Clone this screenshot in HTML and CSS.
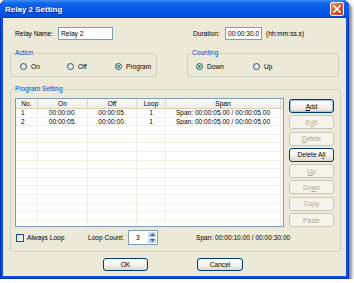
FILE: index.html
```html
<!DOCTYPE html>
<html lang="en">
<head>
  <meta charset="UTF-8">
  <title>Relay 2 Setting</title>
  <link rel="stylesheet" href="styles.css">
</head>
<body>

  <div class="window">
    <div class="titlebar">
      <span class="title">Relay 2 Setting</span>
      <span class="close">
        <svg width="8" height="8" viewBox="0 0 8 8">
          <path d="M1 1 L7 7 M7 1 L1 7" stroke="#fff" stroke-width="1.6" stroke-linecap="square"/>
        </svg>
      </span>
    </div>

    <div class="client">
      <div class="top-row">
        <div class="name-field">
          <span class="label">Relay Name:</span>
          <span class="textbox name-box">Relay 2</span>
        </div>
        <div class="duration-field">
          <span class="label">Duration:</span>
          <span class="textbox duration-box">00:00:30.0</span>
          <span class="hint">(hh:mm:ss.s)</span>
        </div>
      </div>

      <div class="group-row">
        <fieldset class="group action-group">
          <legend>Action</legend>
          <div class="radio-row action-row">
            <label class="radio w-on"><span class="circle"></span>On</label>
            <label class="radio w-off"><span class="circle"></span>Off</label>
            <label class="radio checked"><span class="circle"></span>Program</label>
          </div>
        </fieldset>
        <fieldset class="group counting-group">
          <legend>Counting</legend>
          <div class="radio-row counting-row">
            <label class="radio w-down checked"><span class="circle"></span>Down</label>
            <label class="radio"><span class="circle"></span>Up</label>
          </div>
        </fieldset>
      </div>

      <fieldset class="group program-group">
        <legend>Program Setting</legend>
        <div class="program-inner">
          <div class="program-body">
            <div class="listview">
              <div class="list-header">
                <div class="cell col-no">No.</div>
                <div class="cell col-on">On</div>
                <div class="cell col-off">Off</div>
                <div class="cell col-loop">Loop</div>
                <div class="cell col-span">Span</div>
              </div>
              <div class="list-body" id="listBody"></div>
            </div>

            <div class="button-column">
              <div class="btn default"><span><u>A</u>dd</span></div>
              <div class="btn disabled"><span>E<u>d</u>it</span></div>
              <div class="btn disabled"><span><u>D</u>elete</span></div>
              <div class="btn"><span>Delete A<u>l</u>l</span></div>
              <div class="btn disabled"><span><u>U</u>p</span></div>
              <div class="btn disabled"><span>Do<u>w</u>n</span></div>
              <div class="btn disabled"><span>Copy</span></div>
              <div class="btn disabled"><span>Paste</span></div>
            </div>
          </div>

          <div class="loop-row">
            <label class="check-item"><span class="checkbox"></span>Always Loop</label>
            <span class="count-label">Loop Count:</span>
            <div class="spin">
              <span class="spin-value">3</span>
              <span class="spin-buttons">
                <span class="spin-btn">
                  <svg width="5" height="3" viewBox="0 0 5 3"><path d="M0 3 L2.5 0 L5 3 Z" fill="#4D6185"/></svg>
                </span>
                <span class="spin-btn">
                  <svg width="5" height="3" viewBox="0 0 5 3"><path d="M0 0 L2.5 3 L5 0 Z" fill="#4D6185"/></svg>
                </span>
              </span>
            </div>
            <span class="total-span">Span: 00:00:10.00 / 00:00:30.00</span>
          </div>
        </div>
      </fieldset>

      <div class="dialog-buttons">
        <div class="btn ok-btn">OK</div>
        <div class="btn cancel-btn">Cancel</div>
      </div>
    </div>
  </div>

  <script>
    const rows = [
      { no: "1", on: "00:00:00.", off: "00:00:05.", loop: "1", span: "Span: 00:00:05.00 / 00:00:05.00" },
      { no: "2", on: "00:00:05.", off: "00:00:00.", loop: "1", span: "Span: 00:00:05.00 / 00:00:05.00" }
    ];
    const body = document.getElementById("listBody");

    for (let i = 0; i < 14; i++) {
      const r = rows[i] || { no: "", on: "", off: "", loop: "", span: "" };
      const row = document.createElement("div");
      row.className = "list-row";
      [["col-no", r.no], ["col-on", r.on], ["col-off", r.off], ["col-loop", r.loop], ["col-span", r.span]]
        .forEach(([cls, text]) => {
          const cell = document.createElement("div");
          cell.className = `cell ${cls}`;
          cell.textContent = text;
          row.appendChild(cell);
        });
      body.appendChild(row);
    }
  </script>

</body>
</html>
```

FILE: styles.css
```css
* {
  margin: 0;
  padding: 0;
  box-sizing: border-box;
}

body {
  background-color: #fff;
  font-family: "Liberation Sans", Arial, sans-serif;
  font-size: 6.6px;
  color: #000;
}

.window {
  width: 349px;
  height: 279px;
  display: flex;
  flex-direction: column;
  padding: 0 3px 3px;
  background-color: #0b4fe0;
  border-radius: 6px 6px 0 0;
  box-shadow: 3px 3px 3px rgba(0, 0, 0, 0.45), inset 0 0 0 1px #0730b8;
}

.titlebar {
  height: 18px;
  margin: 0 -3px;
  padding: 0 5px 0 5px;
  display: flex;
  align-items: center;
  justify-content: space-between;
  border-radius: 6px 6px 0 0;
  background: linear-gradient(#3d8ef5 0%, #1466ec 18%, #0658e8 45%, #0453e2 80%, #0346cf 100%);
}

.title {
  color: #fff;
  font-weight: bold;
  font-size: 8px;
  text-shadow: 1px 1px 0 #0a2e9c;
}

.close {
  width: 14px;
  height: 14px;
  border: 1px solid #fff;
  border-radius: 2px;
  background: linear-gradient(135deg, #f09a78 0%, #e0592e 45%, #c53a12 100%);
  display: flex;
  align-items: center;
  justify-content: center;
}

.client {
  flex: 1;
  background-color: #ece9d8;
  padding: 0 7px;
}

/* top fields */

.top-row {
  display: flex;
  align-items: center;
  height: 13px;
  margin-top: 9px;
  padding-left: 5px;
}

.name-field {
  width: 178px;
  display: flex;
  align-items: center;
}

.name-field .label {
  width: 43px;
}

.duration-field {
  display: flex;
  align-items: center;
}

.duration-field .label {
  width: 32px;
}

.textbox {
  height: 13px;
  border: 1px solid #7f9db9;
  background-color: #fff;
  padding-left: 2px;
  line-height: 11px;
}

.name-box {
  width: 55px;
}

.duration-box {
  width: 37px;
}

.hint {
  margin-left: 4px;
}

/* group boxes */

.group {
  border: 1px solid #d0d0bf;
  border-radius: 3px;
}

.group legend {
  color: #0046d5;
  line-height: 8px;
  padding: 0 1px;
  margin-left: 3px;
}

.group-row {
  display: flex;
  gap: 30px;
  margin-top: 9px;
}

.action-group {
  width: 148px;
}

.counting-group {
  width: 153px;
}

.radio-row {
  display: flex;
  padding: 5px 0 5px 9px;
}

.counting-row {
  padding-left: 8px;
}

.radio {
  display: flex;
  align-items: center;
  height: 9px;
}

.radio .circle {
  width: 7px;
  height: 7px;
  margin-right: 4px;
  border: 1px solid #1c5180;
  border-radius: 50%;
  background: linear-gradient(135deg, #dcdad0, #fff);
  display: flex;
  align-items: center;
  justify-content: center;
}

.radio.checked .circle::after {
  content: "";
  width: 3px;
  height: 3px;
  border-radius: 50%;
  background-color: #21a121;
}

.w-on { width: 47px; }
.w-off { width: 48px; }
.w-down { width: 57px; }

/* program setting */

.program-group {
  margin-top: 8px;
}

.program-inner {
  padding: 5px 6px 6px 4px;
}

.program-body {
  display: flex;
  gap: 5px;
}

.listview {
  width: 269px;
  height: 129px;
  border: 1px solid #7f9db9;
  background-color: #fff;
  overflow: hidden;
}

.list-header {
  display: flex;
  height: 10px;
  background: linear-gradient(#fbfaf6, #efede4);
  border-bottom: 1px solid #d6d2c2;
}

.list-header .cell {
  text-align: center;
  line-height: 9px;
  border-right: 1px solid #dcd8c8;
}

.list-row {
  display: flex;
  height: 8.6px;
  border-bottom: 1px solid #f1efe4;
}

.list-row .cell {
  text-align: center;
  line-height: 7.6px;
  border-right: 1px solid #f1efe4;
  white-space: nowrap;
  overflow: hidden;
}

.list-row .col-no {
  text-align: left;
  padding-left: 5px;
}

.col-no { width: 22px; }
.col-on { width: 50px; }
.col-off { width: 49px; }
.col-loop { width: 29px; }
.col-span { width: 115px; }

.button-column {
  width: 45px;
  display: flex;
  flex-direction: column;
  gap: 2.3px;
  padding-top: 1px;
}

.btn {
  height: 14px;
  border: 1px solid #003c74;
  border-radius: 3px;
  background: linear-gradient(#fff 0%, #f4f3ee 55%, #dcd8cb 100%);
  display: flex;
  align-items: center;
  justify-content: center;
}

.btn.default {
  box-shadow: inset 0 0 0 1px #a8c0ee;
}

.btn.disabled {
  border-color: #cac8bb;
  background: #f5f4ea;
  color: #aca899;
}

.btn u {
  text-decoration-thickness: 0.6px;
  text-underline-offset: 1px;
}

.loop-row {
  display: flex;
  align-items: center;
  height: 15px;
  margin-top: 3px;
  padding-left: 1px;
}

.check-item {
  width: 72px;
  display: flex;
  align-items: center;
}

.checkbox {
  width: 8px;
  height: 8px;
  margin-right: 3px;
  border: 1px solid #1c5180;
  background: linear-gradient(135deg, #dcdad0, #fff);
}

.count-label {
  width: 40px;
}

.spin {
  width: 30px;
  height: 15px;
  border: 1px solid #7f9db9;
  background-color: #fff;
  display: flex;
}

.spin-value {
  flex: 1;
  padding-left: 7px;
  line-height: 13px;
}

.spin-buttons {
  width: 9px;
  display: flex;
  flex-direction: column;
  gap: 1px;
  padding: 1px 1px 1px 0;
}

.spin-btn {
  flex: 1;
  border-radius: 1px;
  background: linear-gradient(#d3e0fb, #b6cbf6);
  display: flex;
  align-items: center;
  justify-content: center;
}

.total-span {
  margin-left: 38px;
}

/* OK / Cancel */

.dialog-buttons {
  display: flex;
  justify-content: center;
  gap: 49px;
  margin-top: 6px;
  padding-right: 3px;
}

.ok-btn {
  width: 45px;
  height: 13px;
}

.cancel-btn {
  width: 46px;
  height: 13px;
}
```
